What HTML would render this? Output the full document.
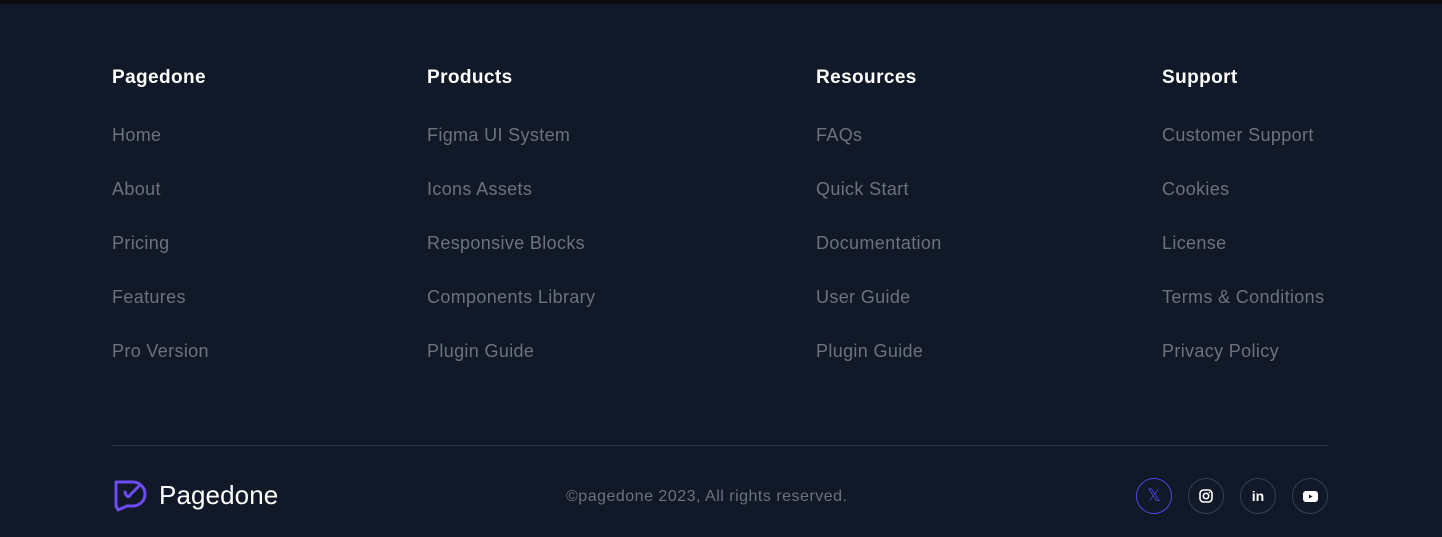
<!DOCTYPE html>
<html><head><style>
*{margin:0;padding:0;box-sizing:border-box}
body{width:1442px;height:537px;background:#111827;font-family:"Liberation Sans",sans-serif;position:relative;overflow:hidden}
.top{position:absolute;left:0;top:0;width:1442px;height:4px;background:#0c0c0e}
.col{position:absolute;top:66px}
.col h4{color:#fff;font-size:19px;font-weight:bold;line-height:24px;margin-bottom:34px;letter-spacing:0.4px}
.col a{display:block;color:#6b7280;font-size:18px;line-height:22px;margin-bottom:32px;text-decoration:none;letter-spacing:0.35px}
.sep{position:absolute;left:112px;top:445px;width:1216px;height:1px;background:#2d3544}
.logo{position:absolute;left:113px;top:478px;display:flex;align-items:center}
.logo span{color:#fff;font-size:26px;margin-left:10px;letter-spacing:0.1px}
.copy{position:absolute;left:566px;top:487px;color:#6b7280;font-size:16px;line-height:20px;letter-spacing:0.5px}
.soc{position:absolute;top:478px;width:36px;height:36px;border-radius:50%;border:1px solid #374151;display:flex;align-items:center;justify-content:center}
</style></head><body>
<div class="top"></div>
<div class="col" style="left:112px"><h4>Pagedone</h4><a>Home</a><a>About</a><a>Pricing</a><a>Features</a><a>Pro Version</a></div>
<div class="col" style="left:427px"><h4>Products</h4><a>Figma UI System</a><a>Icons Assets</a><a>Responsive Blocks</a><a>Components Library</a><a>Plugin Guide</a></div>
<div class="col" style="left:816px"><h4>Resources</h4><a>FAQs</a><a>Quick Start</a><a>Documentation</a><a>User Guide</a><a>Plugin Guide</a></div>
<div class="col" style="left:1162px"><h4>Support</h4><a>Customer Support</a><a>Cookies</a><a>License</a><a>Terms &amp; Conditions</a><a>Privacy Policy</a></div>
<div class="sep"></div>
<div class="logo">
<svg width="36" height="34" viewBox="0 0 36 34"><path d="M3 28V4H20a12 12 0 0 1 0 24H14L5 32Z" fill="none" stroke="#6d4cf5" stroke-width="3" stroke-linejoin="round"/><path d="M12 14q2 8 6 2l8-8" fill="none" stroke="#6d4cf5" stroke-width="3" stroke-linecap="round"/></svg>
<span>Pagedone</span></div>
<div class="copy">©pagedone 2023, All rights reserved.</div>
<div class="soc" style="left:1136px;border-color:#4f46e5"><span style="color:#4f46e5;font-size:17px;font-family:'DejaVu Sans'">𝕏</span></div>
<div class="soc" style="left:1188px"><svg width="14" height="14" viewBox="0 0 14 14"><rect x="1" y="1" width="12" height="12" rx="3.5" fill="none" stroke="#fff" stroke-width="1.6"/><circle cx="7" cy="7" r="2.7" fill="none" stroke="#fff" stroke-width="1.6"/><circle cx="10.5" cy="3.5" r=".8" fill="#fff"/></svg></div>
<div class="soc" style="left:1240px"><span style="color:#fff;font-weight:bold;font-size:14px">in</span></div>
<div class="soc" style="left:1292px"><svg width="15" height="11" viewBox="0 0 15 11"><rect width="15" height="11" rx="3" fill="#fff"/><path d="M6 3.5v4l3.5-2z" fill="#111827"/></svg></div>
</body></html>
